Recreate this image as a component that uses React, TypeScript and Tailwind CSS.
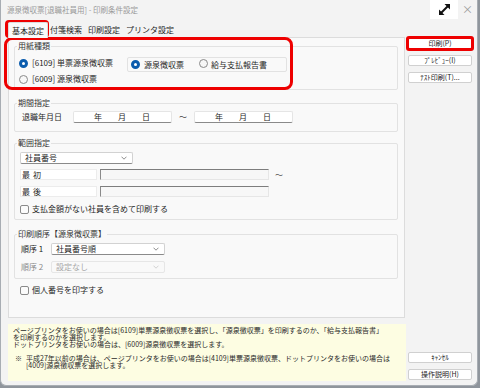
import React from 'react';

type Kids = { children?: React.ReactNode };

function Radio({ on }: { on?: boolean }) {
  return on ? (
    <span className="inline-block w-[9px] h-[9px] shrink-0 rounded-full border-[3px] border-[#0b5cad] bg-white" />
  ) : (
    <span className="inline-block w-[9px] h-[9px] shrink-0 rounded-full border border-[#8a8a8a] bg-[#f7f7f7]" />
  );
}

function Check() {
  return <span className="inline-block w-[9px] h-[9px] shrink-0 rounded-[2px] border border-[#8a8a8a] bg-[#fbfbfb]" />;
}

function Chevron({ muted }: { muted?: boolean }) {
  return (
    <svg width="6" height="4" viewBox="0 0 6 4" className="shrink-0">
      <path d="M0.5 0.7 L3 3.2 L5.5 0.7" fill="none" stroke={muted ? '#c8c8c8' : '#707070'} strokeWidth="0.8" />
    </svg>
  );
}

function Group({ label, className, children }: Kids & { label: string; className?: string }) {
  return (
    <div className={`border border-[#e2e2e2] rounded-[2px] ${className ?? ''}`}>
      <div className="-mt-[6px] ml-[2px] w-fit h-[10px] px-[1px] bg-[#f9f9f9] leading-[10px] text-[#333]">{label}</div>
      {children}
    </div>
  );
}

function Select({ value, width, disabled }: { value: string; width: string; disabled?: boolean }) {
  return (
    <div
      className={`${width} h-[12px] flex items-center justify-between pl-[4px] pr-[5px] rounded-[2px] border leading-[10px] ${
        disabled ? 'border-[#e6e6e6] bg-[#f9f9f9] text-[#a8a8a8]' : 'border-[#d2d2d2] border-b-[#8a8a8a] bg-white'
      }`}
    >
      <span>{value}</span>
      <Chevron muted={disabled} />
    </div>
  );
}

function DateBox() {
  return (
    <div className="w-[99px] h-[12px] flex items-center pl-[20px] gap-[16px] bg-white border border-[#e5e5e5] border-b-[#8a8a8a] rounded-[2px] leading-[10px]">
      <span>年</span>
      <span>月</span>
      <span>日</span>
    </div>
  );
}

function Btn({ children }: Kids) {
  return (
    <div className="w-[64px] h-[11px] flex items-center justify-center bg-white border border-[#d0d0d0] rounded-[2px] text-[7px] leading-[9px] text-[#222]">
      {children}
    </div>
  );
}

export default function App() {
  return (
    <div className="relative w-[480px] h-[388px] bg-[#8f959c] font-['Noto_Sans_CJK_JP','Noto_Sans',sans-serif] text-[8px] text-[#1f1f1f]">
      <div className="w-[478px] h-[386px] bg-[#f3f3f3] border-l border-r border-b border-[#a8adb3] rounded-br-[6px] rounded-bl-[6px] flex flex-col">
        {/* title bar */}
        <div className="h-[20px] flex items-start shrink-0">
          <span className="pl-[6px] pt-[5px] text-[7.5px] leading-[10px] text-[#9a9a9a]">源泉徴収票[退職社員用] - 印刷条件設定</span>
          <div className="ml-auto w-[28px] h-[19px] bg-white flex items-center justify-center">
            <svg width="15" height="15" viewBox="0 0 15 15">
              <path d="M4 11 L11 4" stroke="#111" strokeWidth="2" />
              <path d="M7.5 2 H13 V7.5 Z" fill="#111" />
              <path d="M2 7.5 V13 H7.5 Z" fill="#111" />
            </svg>
          </div>
          <span className="w-[19px] h-[19px] flex items-center justify-center text-[11px] text-[#9a9a9a]">×</span>
        </div>

        <div className="flex flex-1">
          {/* left column */}
          <div className="w-[405px] pl-[7px] flex flex-col">
            {/* tabs */}
            <div className="h-[17px] flex items-end shrink-0">
              <div className="relative z-10 -mb-[1px] w-[40px] h-[16px] bg-[#f9f9f9] border-t border-x border-[#dcdcdc] rounded-t-[2px] flex items-center justify-center leading-[14px]">
                基本設定
              </div>
              <span className="ml-[2px] h-[14px] leading-[14px]">付箋検索</span>
              <span className="ml-[6px] h-[14px] leading-[14px]">印刷設定</span>
              <span className="ml-[6px] h-[14px] leading-[14px]">プリンタ設定</span>
            </div>

            {/* main panel */}
            <div className="w-[397px] h-[281px] bg-[#f9f9f9] border border-[#dcdcdc] pl-[5px] pr-[6px] flex flex-col">
              <Group label="用紙種類" className="mt-[8px]">
                <div className="flex mt-[6px] pb-[4px]">
                  <div className="ml-[4px] w-[108px] flex flex-col gap-[4px]">
                    <div className="h-[12px] flex items-center gap-[4px]">
                      <Radio on />
                      <span>[6109] 単票源泉徴収票</span>
                    </div>
                    <div className="h-[12px] flex items-center gap-[4px]">
                      <Radio />
                      <span>[6009] 源泉徴収票</span>
                    </div>
                  </div>
                  <div className="w-[160px] h-[15px] border border-[#e2e2e2] rounded-[2px] flex items-center pl-[3px]">
                    <Radio on />
                    <span className="ml-[4px]">源泉徴収票</span>
                    <span className="ml-[15px]"><Radio /></span>
                    <span className="ml-[3px]">給与支払報告書</span>
                  </div>
                </div>
              </Group>

              <Group label="期間指定" className="mt-[13px]">
                <div className="mt-[3px] pb-[8px] pl-[7px] h-[20px] flex items-start">
                  <div className="h-[12px] flex items-center">
                    <span className="w-[51px]">退職年月日</span>
                    <DateBox />
                    <span className="w-[22px] text-center text-[#444]">～</span>
                    <DateBox />
                  </div>
                </div>
              </Group>

              <Group label="範囲指定" className="mt-[11px]">
                <div className="ml-[5px] mt-[4px] pb-[5px] flex flex-col">
                  <Select value="社員番号" width="w-[113px]" />
                  <div className="mt-[5px] h-[11px] flex items-center">
                    <div className="w-[77px] h-[11px] bg-white border border-[#ececec] flex items-center pl-[1px] leading-[9px]">
                      <span>最</span>
                      <span className="ml-[3px]">初</span>
                    </div>
                    <div className="ml-[3px] w-[169px] h-[11px] bg-[#f7f7f7] border border-[#e6e6e6] border-t-[#7d7d7d] border-l-[#8a8a8a]" />
                    <span className="ml-[6px] text-[#555]">～</span>
                  </div>
                  <div className="mt-[6px] h-[11px] flex items-center">
                    <div className="w-[77px] h-[11px] bg-white border border-[#ececec] flex items-center pl-[1px] leading-[9px]">
                      <span>最</span>
                      <span className="ml-[3px]">後</span>
                    </div>
                    <div className="ml-[3px] w-[169px] h-[11px] bg-[#f7f7f7] border border-[#e6e6e6] border-t-[#7d7d7d] border-l-[#8a8a8a]" />
                  </div>
                  <div className="mt-[7px] h-[10px] flex items-center gap-[3px]">
                    <Check />
                    <span>支払金額がない社員を含めて印刷する</span>
                  </div>
                </div>
              </Group>

              <Group label="印刷順序【源泉徴収票】" className="mt-[14px]">
                <div className="ml-[6px] mt-[4px] pb-[5px] flex flex-col gap-[6px]">
                  <div className="h-[12px] flex items-center">
                    <span className="w-[30px]">順序 1</span>
                    <Select value="社員番号順" width="w-[114px]" />
                  </div>
                  <div className="h-[12px] flex items-center">
                    <span className="w-[30px] text-[#8a8a8a]">順序 2</span>
                    <Select value="設定なし" width="w-[114px]" disabled />
                  </div>
                </div>
              </Group>

              <div className="mt-[6px] ml-[6px] h-[10px] flex items-center gap-[3px]">
                <Check />
                <span>個人番号を印字する</span>
              </div>
            </div>

            {/* notes */}
            <div className="mt-[6px] w-[398px] h-[57px] bg-[#fdfde2] pl-[5px] pt-[3px] text-[7px] leading-[7px] text-[#2a2a2a] whitespace-nowrap">
              <div>ページプリンタをお使いの場合は[6109]単票源泉徴収票を選択し、「源泉徴収票」を印刷するのか、「給与支払報告書」</div>
              <div>を印刷するのかを選択します。</div>
              <div>ドットプリンタをお使いの場合は、[6009]源泉徴収票を選択します。</div>
              <div className="mt-[7px] flex">
                <span className="w-[13px] pl-[2px]">※</span>
                <div>
                  <div>平成27年以前の場合は、ページプリンタをお使いの場合は[4109]単票源泉徴収票、ドットプリンタをお使いの場合は</div>
                  <div>[4009]源泉徴収票を選択します。</div>
                </div>
              </div>
            </div>
          </div>

          {/* right column */}
          <div className="pl-[2px] pt-[18px] pb-[5px] flex flex-col">
            <div className="flex flex-col gap-[6px]">
              <Btn>印刷(P)</Btn>
              <Btn>ﾌﾟﾚﾋﾞｭｰ(I)</Btn>
              <Btn>ﾃｽﾄ印刷(T)...</Btn>
            </div>
            <div className="mt-auto flex flex-col gap-[6px]">
              <Btn>ｷｬﾝｾﾙ</Btn>
              <Btn>操作説明(H)</Btn>
            </div>
          </div>
        </div>
      </div>

      {/* red annotation highlights */}
      <div className="absolute left-[5px] top-[20px] w-[44px] h-[18px] border-[3px] border-[#ee0000] rounded-[4px] pointer-events-none" />
      <div className="absolute left-[4px] top-[37px] w-[289px] h-[53px] border-[3px] border-[#ee0000] rounded-[8px] pointer-events-none" />
      <div className="absolute left-[406px] top-[36px] w-[68px] h-[15px] border-[3px] border-[#ee0000] rounded-[3px] pointer-events-none" />
    </div>
  );
}
